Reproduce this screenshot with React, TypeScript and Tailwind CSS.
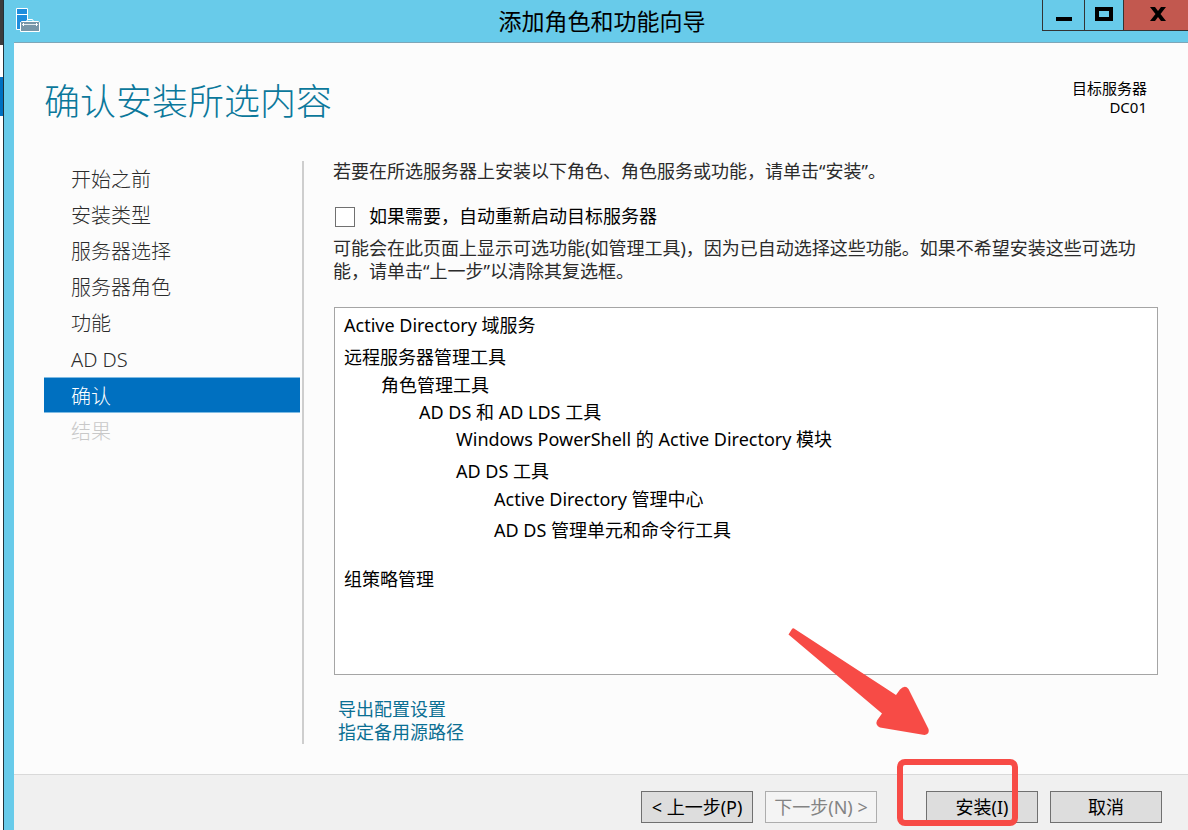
import type { ReactNode } from "react";

const steps = [
  { label: "开始之前", state: "open" },
  { label: "安装类型", state: "open" },
  { label: "服务器选择", state: "open" },
  { label: "服务器角色", state: "open" },
  { label: "功能", state: "open" },
  { label: "AD DS", state: "open" },
  { label: "确认", state: "current" },
  { label: "结果", state: "disabled" },
];

const stepStyle: Record<string, string> = {
  open: "text-[#2b2b2b]",
  current: "border-y border-[#7fbbe3] bg-[#0070c0] text-white leading-9",
  disabled: "text-[#c8c8c8]",
};

const features = [
  { label: "Active Directory 域服务", place: "" },
  { label: "远程服务器管理工具", place: "mt-[5px]" },
  { label: "角色管理工具", place: "mt-px pl-[37px]" },
  { label: "AD DS 和 AD LDS 工具", place: "pl-[75px]" },
  { label: "Windows PowerShell 的 Active Directory 模块", place: "pl-[112px]" },
  { label: "AD DS 工具", place: "mt-[5px] pl-[112px]" },
  { label: "Active Directory 管理中心", place: "mt-px pl-[150px]" },
  { label: "AD DS 管理单元和命令行工具", place: "mt-1 pl-[150px]" },
  { label: "组策略管理", place: "mt-[22px]" },
];

function WizardIcon() {
  return (
    <svg className="h-6 w-6" viewBox="0 0 24 24" aria-hidden="true">
      <path d="M.5.5h11v21H.5z" fill="#1e8ddd" stroke="#fff" />
      <path d="M1 6.500h10" stroke="#fff" />
      <path d="M10.500 13.500l1-2h5l1 2" fill="#68cbea" stroke="#fff" />
      <path d="M5.500 13.500h17l1 1v9h-19v-9z" fill="#7896a8" stroke="#fff" />
      <path d="M6 16.500h16" stroke="#fff" strokeOpacity=".8" />
      <path d="M7.500 15v3M20.500 15v3" stroke="#fff" />
    </svg>
  );
}

function FooterButton({ children, disabled }: { children: ReactNode; disabled?: boolean }) {
  return (
    <button
      type="button"
      disabled={disabled}
      className="h-8 w-28 border border-[#707070] bg-[#dddddd] text-[18px] whitespace-nowrap text-black disabled:border-[#adadad] disabled:bg-[#f4f4f4] disabled:text-[#838383]"
    >
      {children}
    </button>
  );
}

export default function App() {
  return (
    <div className="flex min-h-screen overflow-hidden bg-[#68cbea] font-['Noto_Sans','Noto_Sans_CJK_SC',sans-serif] text-[18px] text-black">
      <div className="flex w-[3px] shrink-0 flex-col bg-white" aria-hidden="true">
        <div className="h-[45px] bg-[#3c3c3c]" />
        <div className="mt-8 h-[39px] bg-[#0070c0]" />
      </div>

      <div className="flex min-w-0 flex-1 flex-col border-l border-[#20333b]">
        <header className="grid h-[42px] shrink-0 grid-cols-[1fr_auto_1fr]">
          <div className="pt-2 pl-3">
            <WizardIcon />
          </div>
          <div className="pl-3 text-[23px] leading-[42px]">添加角色和功能向导</div>
          <div className="flex h-[31px] justify-end">
            <button type="button" aria-label="最小化" className="flex w-[42px] justify-center border-b border-l border-[#333] pt-[17px]">
              <span className="h-1 w-4 bg-black" />
            </button>
            <button type="button" aria-label="最大化" className="flex w-[39px] justify-center border-b border-l border-[#333] pt-[7px]">
              <span className="h-[14px] w-[18px] border-4 border-black" />
            </button>
            <button type="button" aria-label="关闭" className="flex w-[65px] justify-center border-b border-l border-[#333] bg-[#c2584f] pt-[7px]">
              <svg className="ml-1 h-[14px] w-4" viewBox="0 0 16 14" aria-hidden="true">
                <path d="M0 0h5l3 4 3-4h5l-5.500 7 5.500 7h-5l-3-4-3 4H0l5.500-7z" />
              </svg>
            </button>
          </div>
        </header>

        <div className="ml-[10px] flex flex-1 flex-col border-t border-[#7ea6b8] bg-[#fcfcfc]">
          <div className="flex h-[118px] shrink-0 items-start justify-between pr-[41px] pl-[30px]">
            <h1 className="pt-[33px] text-[36px] leading-[52px] font-light text-[#0b789b]">确认安装所选内容</h1>
            <div className="pt-9 text-right text-[15px] leading-[19px]">
              <p>目标服务器</p>
              <p>DC01</p>
            </div>
          </div>

          <main className="flex flex-1 pr-[30px] pb-[30px] pl-[30px]">
            <nav className="w-[260px] shrink-0 border-r-2 border-[#cecece]">
              <ul>
                {steps.map((step) => (
                  <li
                    key={step.label}
                    aria-current={step.state === "current" ? "step" : undefined}
                    className={`h-9 w-64 pl-[27px] text-[20px] leading-[38px] font-light ${stepStyle[step.state]}`}
                  >
                    {step.label}
                  </li>
                ))}
              </ul>
            </nav>

            <section className="flex min-w-0 flex-1 flex-col pl-[29px]">
              <p className="leading-[21px] text-[#2b2b2b]">
                若要在所选服务器上安装以下角色、角色服务或功能，请单击“安装”。
              </p>
              <label className="mt-[23px] flex items-center gap-[14px] pl-[2px] leading-[23px]">
                <input type="checkbox" className="h-5 w-5 appearance-none border border-[#707070] bg-white" />
                如果需要，自动重新启动目标服务器
              </label>
              <p className="mt-[9px] leading-[23px] text-[#2b2b2b]">
                可能会在此页面上显示可选功能(如管理工具)，因为已自动选择这些功能。如果不希望安装这些可选功能，请单击“上一步”以清除其复选框。
              </p>
              <ul className="mt-6 ml-[1px] min-h-[368px] flex-1 border border-[#a5a5a5] bg-white px-[9px] py-1">
                {features.map((feature) => (
                  <li key={feature.label} className={`leading-[27px] ${feature.place}`}>
                    {feature.label}
                  </li>
                ))}
              </ul>
              <div className="mt-[23px] flex flex-col items-start pl-[5px] leading-[23px] text-[#0b6f93]">
                <a href="#export">导出配置设置</a>
                <a href="#source">指定备用源路径</a>
              </div>
            </section>
          </main>

          <footer className="flex h-[57px] shrink-0 justify-end gap-3 border-t border-[#d9d9d9] bg-[#f0f0f0] pt-4 pr-[26px]">
            <FooterButton>&lt; 上一步(P)</FooterButton>
            <FooterButton disabled>下一步(N) &gt;</FooterButton>
            <div className="relative ml-[37px]">
              <FooterButton>安装(I)</FooterButton>
              <div className="pointer-events-none absolute -top-8 left-[-29px] h-[67px] w-[121px] rounded-lg border-[6px] border-[#f74b46]" />
              <svg
                className="pointer-events-none absolute top-[-167px] left-[-142px] h-[116px] w-[150px]"
                viewBox="0 0 150 116"
                aria-hidden="true"
              >
                <path
                  d="M8 5q.8-1.200 2-.5L112 71l4-5.500q5-5 8.500-.5L144.500 105q1.500 5-4 6L96 103.500q-5-2.500-3-7l5-7L4.500 10.500z"
                  fill="#f74b46"
                />
              </svg>
            </div>
            <FooterButton>取消</FooterButton>
          </footer>
        </div>
      </div>
    </div>
  );
}
